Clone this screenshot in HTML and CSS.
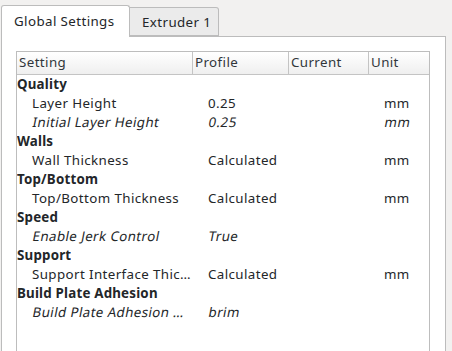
FILE: index.html
```html
<!DOCTYPE html>
<html lang="en">
<head>
  <meta charset="UTF-8" />
  <title>Settings</title>
  <link rel="stylesheet" href="styles.css">
</head>
<body>
  <div class="tabs">
    <div class="tab active">Global Settings</div>
    <div class="tab">Extruder 1</div>
  </div>

  <section class="pane">
    <div class="tree">
      <div class="tree-head">
        <div class="col c-setting">Setting</div>
        <div class="col c-profile">Profile</div>
        <div class="col c-current">Current</div>
        <div class="col c-unit">Unit</div>
      </div>

      <div class="row group"><span class="c-setting">Quality</span></div>
      <div class="row">
        <span class="c-setting">Layer Height</span><span class="c-profile">0.25</span><span class="c-current"></span><span class="c-unit">mm</span>
      </div>
      <div class="row italic">
        <span class="c-setting"><em>Initial Layer Height</em></span><span class="c-profile"><em>0.25</em></span><span class="c-current"></span><span class="c-unit"><em>mm</em></span>
      </div>
      <div class="row group"><span class="c-setting">Walls</span></div>
      <div class="row">
        <span class="c-setting">Wall Thickness</span><span class="c-profile">Calculated</span><span class="c-current"></span><span class="c-unit">mm</span>
      </div>
      <div class="row group"><span class="c-setting">Top/Bottom</span></div>
      <div class="row">
        <span class="c-setting">Top/Bottom Thickness</span><span class="c-profile">Calculated</span><span class="c-current"></span><span class="c-unit">mm</span>
      </div>
      <div class="row group"><span class="c-setting">Speed</span></div>
      <div class="row italic">
        <span class="c-setting"><em>Enable Jerk Control</em></span><span class="c-profile"><em>True</em></span><span class="c-current"></span><span class="c-unit"></span>
      </div>
      <div class="row group"><span class="c-setting">Support</span></div>
      <div class="row">
        <span class="c-setting">Support Interface Thic…</span><span class="c-profile">Calculated</span><span class="c-current"></span><span class="c-unit">mm</span>
      </div>
      <div class="row group"><span class="c-setting">Build Plate Adhesion</span></div>
      <div class="row italic">
        <span class="c-setting"><em>Build Plate Adhesion …</em></span><span class="c-profile"><em>brim</em></span><span class="c-current"></span><span class="c-unit"></span>
      </div>
    </div>
  </section>
</body>
</html>
```

FILE: styles.css
```css
* {
  box-sizing: border-box;
  margin: 0;
  padding: 0;
}

body {
  font-family: "Noto Sans", sans-serif;
  font-size: 13.33px;
  letter-spacing: 0.4px;
  color: #232629;
  background: #f2f1f0;
  height: 351px;
  overflow: hidden;
  padding-left: 1px;
}

.tabs {
  display: flex;
  align-items: flex-end;
  height: 36px;
  position: relative;
  z-index: 1;
}

.tab {
  height: 29px;
  padding: 0 11px 0 12px;
  line-height: 28px;
  border: 1px solid #bcbcbc;
  border-left: none;
  border-radius: 0 3px 0 0;
  background: #ebebeb;
  color: #232629;
  white-space: nowrap;
}

.tab.active {
  height: 32px;
  padding: 0 0 0 12px;
  line-height: 31px;
  border-left: 1px solid #bcbcbc;
  border-bottom: none;
  border-radius: 3px 3px 0 0;
  background: #fff;
  width: 129px;
  margin-bottom: -1px;
}

.tab + .tab {
  width: 89px;
}

.pane {
  width: 445px;
  height: 330px;
  background: #fff;
  border: 1px solid #bcbcbc;
  padding: 14px 15px 0 14px;
}

.tree {
  height: 400px;
  border: 1px solid #bdbdbd;
  border-bottom: none;
}

.tree-head {
  display: flex;
  height: 23px;
  border-bottom: 1px solid #c4c4c4;
  background: linear-gradient(#ffffff, #efefef);
  color: #31363b;
}

.tree-head .col {
  padding-left: 2px;
  line-height: 21px;
  border-right: 1px solid #c4c4c4;
}

.tree-head .c-unit {
  border-right: none;
}

.c-setting { width: 176px; }
.c-profile { width: 96px; }
.c-current { width: 80px; }
.c-unit { width: 60px; }

.row {
  display: flex;
  height: 19px;
  line-height: 19px;
  white-space: nowrap;
}

.row span {
  display: block;
  overflow: hidden;
}

.row .c-setting {
  padding-left: 15px;
}

.row .c-profile,
.row .c-unit {
  padding-left: 15px;
}

.row.group .c-setting {
  width: auto;
  padding-left: 0;
  font-weight: bold;
  letter-spacing: 0.2px;
}

/* slanted regular face, keeps the upright widths */
.row.italic em {
  display: inline-block;
  font-style: normal;
  transform: skewX(-11deg);
  transform-origin: 0 70%;
}
```
